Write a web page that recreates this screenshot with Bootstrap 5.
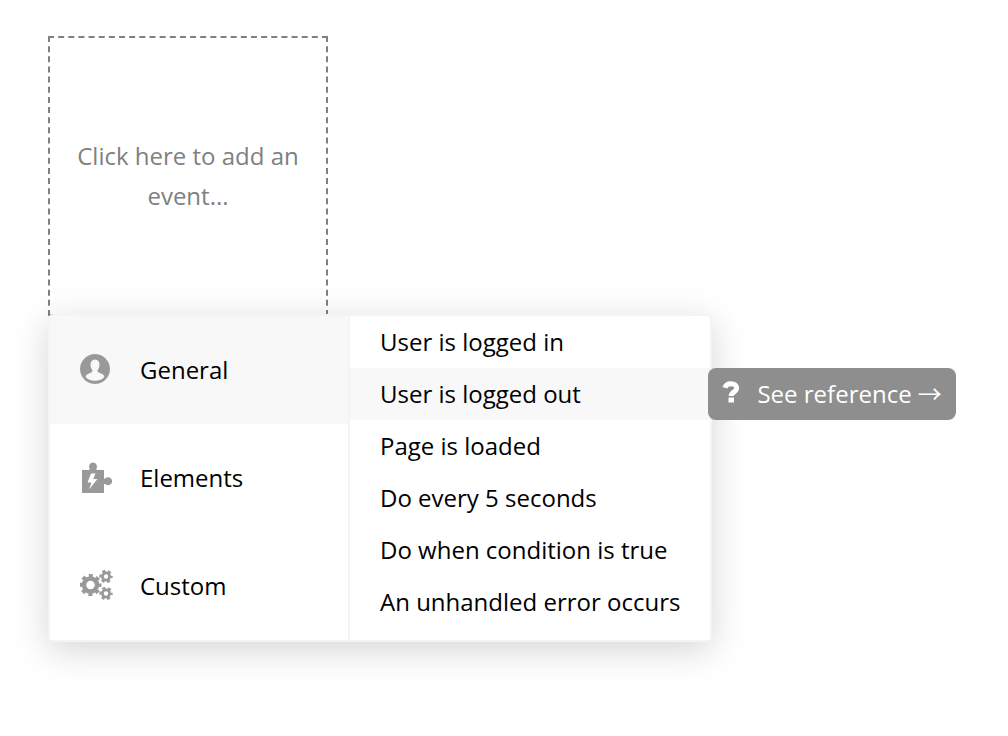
<!DOCTYPE html>
<html lang="en">
<head>
<meta charset="utf-8">
<meta name="viewport" content="width=device-width, initial-scale=1">
<title>Add an event</title>
<link href="https://cdn.jsdelivr.net/npm/bootstrap@5.3.0/dist/css/bootstrap.min.css" rel="stylesheet">
<style>
  body { font-family: "Open Sans", "Noto Sans CJK JP", sans-serif; font-size: 24px; line-height: 40px; color: #000; background: #fff; }
  .workflow { padding: 36px 48px; }
  .event-slot { width: 280px; height: 280px; border: 2px dashed #808080; color: #808080; font-size: 24px; line-height: 40px; }
  .event-menu { margin-top: -2px; border: 2px solid #f4f4f4; border-radius: 5px; box-shadow: 0 8px 36px rgba(0, 0, 0, .17); }
  .categories { width: 300px; border-right: 2px solid #f4f4f4; }
  .category { height: 108px; padding: 0 30px; gap: 26px; }
  .category svg { width: 34px; height: 34px; fill: #999; }
  .choice { height: 52px; padding: 0 30px; }
  .category, .choice { color: #000; white-space: nowrap; }
  .category.active, .choice.active, .category:hover, .choice:hover { background: #f8f8f8; }
  .reference { left: 100%; margin-left: -2px; height: 52px; padding: 0 14px; gap: 15px; border-radius: 8px; background: #8e8e8e; white-space: nowrap; }
</style>
</head>
<body>
<main class="workflow min-vh-100 d-flex flex-column align-items-start">
  <button type="button" class="event-slot bg-transparent p-3 text-center">Click here to add an event...</button>

  <div class="event-menu d-flex bg-white position-relative">
    <nav class="categories d-flex flex-column flex-shrink-0" aria-label="Event categories">
      <button type="button" class="category active d-flex align-items-center border-0">
        <svg viewBox="0 0 34 34" aria-hidden="true"><path fill-rule="evenodd" d="M15 1a15 15 0 1 0 .01 0zM15 6.500c3 0 4.500 2.200 4.500 5.300 0 2.400-.9 4.200-2 5.500 0 1.500.6 2.300 2.500 2.700 2.500.8 4.600 2.200 4.200 4C22.500 26.500 19 27.800 15 27.800S7.500 26.500 5.800 24c-.4-1.800 1.700-3.200 4.200-4 1.900-.4 2.500-1.200 2.500-2.700-1.100-1.300-2-3.100-2-5.500 0-3.100 1.500-5.300 4.500-5.300z"/></svg>
        General
      </button>
      <button type="button" class="category d-flex align-items-center border-0 bg-transparent">
        <svg viewBox="0 0 34 34" aria-hidden="true"><path fill-rule="evenodd" d="M2 9h7.500V7.500a4 4 0 1 1 7 0V9H24v8.500h1.300a4 4 0 1 1 0 5.500H24v9H2zM11 12.500L7.500 21.500h4L9 28.500l8.500-10.500h-4.300L15.500 12.500z"/></svg>
        Elements
      </button>
      <button type="button" class="category d-flex align-items-center border-0 bg-transparent">
        <svg viewBox="0 0 34 34" aria-hidden="true">
          <g fill="none" stroke="#999">
            <circle cx="10.500" cy="16" r="6.500" stroke-width="4.400"/>
            <circle cx="10.500" cy="16" r="9.400" stroke-width="3.200" stroke-dasharray="4 3.383" stroke-dashoffset="2"/>
            <circle cx="26" cy="7.500" r="3.600" stroke-width="2.800"/>
            <circle cx="26" cy="7.500" r="5.500" stroke-width="2.400" stroke-dasharray="3 2.760" stroke-dashoffset="1.500"/>
            <circle cx="26" cy="24.500" r="3.600" stroke-width="2.800"/>
            <circle cx="26" cy="24.500" r="5.500" stroke-width="2.400" stroke-dasharray="3 2.760" stroke-dashoffset="1.500"/>
          </g>
        </svg>
        Custom
      </button>
    </nav>

    <ul class="list-unstyled mb-0 flex-grow-1">
      <li><button type="button" class="choice d-block w-100 border-0 bg-transparent text-start">User is logged in</button></li>
      <li class="position-relative d-flex">
        <button type="button" class="choice active d-block w-100 border-0 text-start">User is logged out</button>
        <a href="#reference" class="reference position-absolute top-0 d-flex align-items-center text-white text-decoration-none">
          <svg width="20" height="28" viewBox="0 0 20 28" aria-hidden="true"><path d="M2.800 7.800C3.800 4.800 6.200 3.700 9 3.700c3.500 0 5.700 1.700 5.700 4.400 0 3.900-5.500 3.700-5.500 7.900" fill="none" stroke="#fff" stroke-width="5"/><path fill="#fff" d="M6.500 17.500h5.500v5H6.500z"/></svg>
          See reference →
        </a>
      </li>
      <li><button type="button" class="choice d-block w-100 border-0 bg-transparent text-start">Page is loaded</button></li>
      <li><button type="button" class="choice d-block w-100 border-0 bg-transparent text-start">Do every 5 seconds</button></li>
      <li><button type="button" class="choice d-block w-100 border-0 bg-transparent text-start">Do when condition is true</button></li>
      <li><button type="button" class="choice d-block w-100 border-0 bg-transparent text-start">An unhandled error occurs</button></li>
    </ul>
  </div>
</main>
<script src="https://cdn.jsdelivr.net/npm/bootstrap@5.3.0/dist/js/bootstrap.bundle.min.js"></script>
</body>
</html>
